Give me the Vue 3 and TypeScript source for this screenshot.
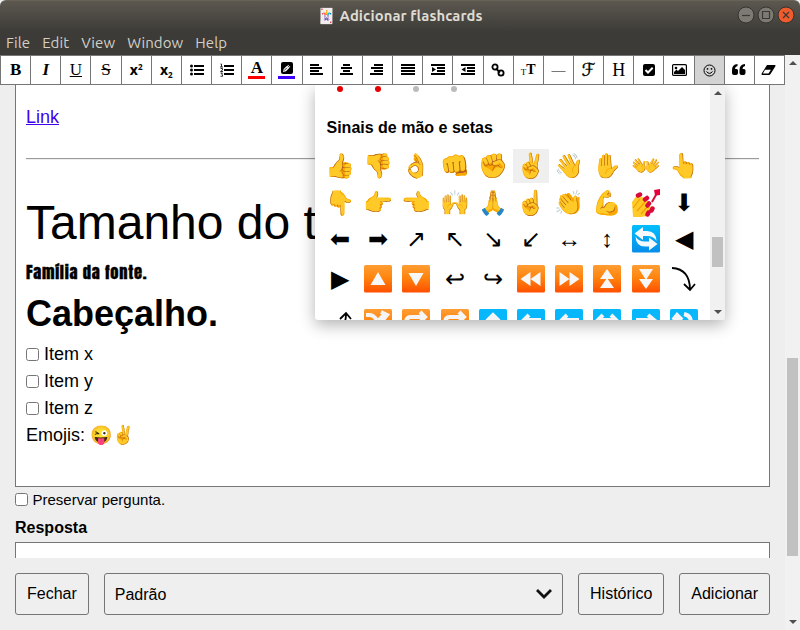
<script setup lang="ts">
interface Tool { id: string; text?: string; lines?: number[][] }
const tools: Tool[] = [
  { id: 'bold', text: 'B' }, { id: 'italic', text: 'I' }, { id: 'underline', text: 'U' }, { id: 'strike', text: 'S' },
  { id: 'sup' }, { id: 'sub' }, { id: 'ul' }, { id: 'ol' }, { id: 'color', text: 'A' }, { id: 'mark' },
  { id: 'left', lines: [[0, 9], [0, 12], [0, 9], [0, 13]] },
  { id: 'center', lines: [[3, 7], [1, 11], [3, 7], [0, 13]] },
  { id: 'right', lines: [[4, 9], [1, 12], [4, 9], [0, 13]] },
  { id: 'justify', lines: [[0, 14], [0, 14], [0, 14], [0, 14]] },
  { id: 'indent', lines: [[0, 14], [6, 8], [6, 8], [0, 14]] },
  { id: 'outdent', lines: [[0, 14], [6, 8], [6, 8], [0, 14]] },
  { id: 'link' }, { id: 'size' }, { id: 'hr', text: '—' }, { id: 'font', text: 'ℱ' }, { id: 'head', text: 'H' },
  { id: 'check' }, { id: 'image' }, { id: 'emoji' }, { id: 'quote' }, { id: 'clear' },
]
const menus = ['File', 'Edit', 'View', 'Window', 'Help']
const rows: string[][] = [
  ['👍', '👎', '👌', '👊', '✊', '✌️', '👋', '✋', '👐', '👆'],
  ['👇', '👉', '👈', '🙌', '🙏', '☝️', '👏', '💪', 'nails', '⬇'],
  ['⬅', '➡', '↗', '↖', '↘', '↙', '↔', '↕', 'cycle', '◀'],
  ['▶', 'oup', 'odown', '↩', '↪', 'orew', 'offw', 'odup', 'oddown', 'curve'],
  ['curveup', 'oshuffle', 'orepeat', 'orepeat', 'bup', 'bleft', 'bleft', 'bboth', 'bright', 'bturn'],
]
const orangeSolid: Record<string, string> = {
  oup: 'M14 7l7.500 13h-15z',
  odown: 'M14 21L6.500 8h15z',
  orew: 'M13.500 7v14L3.500 14zM23.500 7v14L13.500 14z',
  offw: 'M4.500 7v14l10-7zM14.500 7v14l10-7z',
  odup: 'M14 4l7 10H7zM14 13l7 10H7z',
  oddown: 'M14 24L7 14h14zM14 15L7 4h14z',
}
const orangeLine: Record<string, string> = {
  oshuffle: 'M2 6h4q4 0 8 7t8 7M2 20h4q4 0 8-7t8-7M17 3l6 3-5 6',
  orepeat: 'M4 18v-4q0-6 5-6h13M18 3l5 5-5 5',
}
const blueArrow: Record<string, string> = {
  bup: 'M14 23V7M8 12l6-6 6 6',
  bleft: 'M24 11H6M12 6l-5 5 5 5',
  bright: 'M4 11h18M16 6l6 5-6 5',
  bboth: 'M5 11h18M10 6l-5 5 5 5M18 6l5 5-5 5',
  bturn: 'M7 17V7M3 11l4-5 5 5M14 5q9 2 6 12',
}
const drawn = new Set(['nails', 'cycle', 'curve', 'curveup', ...Object.keys(orangeSolid), ...Object.keys(orangeLine), ...Object.keys(blueArrow)])
const items = ['Item x', 'Item y', 'Item z']
</script>

<template>
  <div class="window">
    <header class="chrome">
      <div class="title">
        <span class="joker">🃏</span><span>Adicionar flashcards</span>
        <div class="controls">
          <svg v-for="c in ['min', 'max', 'close']" :key="c" width="18" height="18" viewBox="0 0 18 18" :class="['ctl', c]">
            <circle cx="9" cy="9" r="8" />
            <path v-if="c === 'min'" d="M5 9.500h8" />
            <path v-else-if="c === 'max'" d="M5.500 5.500h7v7h-7z" />
            <path v-else d="M6 6l6 6M12 6l-6 6" />
          </svg>
        </div>
      </div>
      <nav class="menu"><span v-for="m in menus" :key="m">{{ m }}</span></nav>
    </header>

    <div class="page">
      <div class="left">
        <div class="toolbar">
          <button v-for="t in tools" :key="t.id" :class="['tool', t.id]">
            <svg v-if="t.lines" width="14" height="14" viewBox="0 0 14 14">
              <rect v-for="(l, i) in t.lines" :key="i" :x="l[0]" :y="1 + i * 3" :width="l[1]" height="2" />
              <path v-if="t.id === 'indent'" d="M1 4l4 2.500L1 9z" />
              <path v-if="t.id === 'outdent'" d="M4.500 4l-4 2.500 4 2.500z" />
            </svg>
            <template v-else-if="t.id === 'sup'">x<sup>2</sup></template>
            <template v-else-if="t.id === 'sub'">x<sub>2</sub></template>
            <svg v-else-if="t.id === 'ul'" width="14" height="14" viewBox="0 0 14 14">
              <path d="M4 2h10v2H4zM4 6h10v2H4zM4 10h10v2H4z" />
              <circle cx="1.500" cy="3" r="1.500" /><circle cx="1.500" cy="7" r="1.500" /><circle cx="1.500" cy="11" r="1.500" />
            </svg>
            <svg v-else-if="t.id === 'ol'" width="14" height="14" viewBox="0 0 14 14">
              <path d="M4 2h10v2H4zM4 6h10v2H4zM4 10h10v2H4z" />
              <path class="thin" d="M.5 1h1v3M0 4h3M.5 5.500h2V7l-2 1.500H3M.5 10h2l-1 1.200 1 .5v1.600h-2" />
            </svg>
            <template v-else-if="t.id === 'color'"><span class="glyph">A</span><i class="bar red" /></template>
            <template v-else-if="t.id === 'mark'">
              <svg width="12" height="12" viewBox="0 0 12 12"><rect width="12" height="12" rx="2" /><path fill="#fff" d="M2 10l.7-3L7 2.700l2.300 2.300L5 9.300z" /><path d="M6.200 3.300l2.400 2.400M3 8.700l3-3" stroke="#000" stroke-width=".8" /></svg>
              <i class="bar blue" />
            </template>
            <svg v-else-if="t.id === 'link'" width="14" height="14" viewBox="0 0 14 14" class="stroke">
              <circle cx="4" cy="4" r="2.600" /><circle cx="10" cy="10" r="2.600" /><path d="M5 5.500l4 4" />
            </svg>
            <template v-else-if="t.id === 'size'"><span class="t1">T</span><span class="t2">T</span></template>
            <svg v-else-if="t.id === 'check'" width="12" height="12" viewBox="0 0 12 12"><rect width="12" height="12" rx="2" /><path d="M2.500 6l2.500 2.500L9.700 3.700" fill="none" stroke="#fff" stroke-width="2" /></svg>
            <svg v-else-if="t.id === 'image'" width="15" height="12" viewBox="0 0 15 12"><rect x=".6" y=".6" width="13.800" height="10.800" rx="1" fill="none" stroke="#000" stroke-width="1.200" /><circle cx="4" cy="4" r="1.300" /><path d="M2 10V8l2.500-2.500L6 7l4-4 3 3v4z" /></svg>
            <svg v-else-if="t.id === 'emoji'" width="13" height="13" viewBox="0 0 13 13"><circle cx="6.500" cy="6.500" r="5.500" fill="none" stroke="#000" /><circle cx="4.500" cy="4.800" r=".9" /><circle cx="8.500" cy="4.800" r=".9" /><path d="M3.500 7.500q3 3.800 6 0" fill="none" stroke="#000" /></svg>
            <svg v-else-if="t.id === 'quote'" width="14" height="12" viewBox="0 0 14 12"><path d="M5.500 0v2Q3 2.500 3 5h1.500q1.500 0 1.500 1.500V9q0 2-2 2H2q-2 0-2-2V6q0-5.500 5.500-6zM13 0v2q-2.500.5-2.500 3H12q1.500 0 1.500 1.500V9q0 2-2 2h-2q-2 0-2-2V6q0-5.500 5.500-6z" /></svg>
            <svg v-else-if="t.id === 'clear'" width="16" height="12" viewBox="0 0 16 12"><path d="M6 1h7.500q1.500 0 .9 1.200L9.500 10q-.5 1-1.600 1H1.500Q0 11 .7 9.600zM4 5.800L1.900 9.500h5.600l2.400-3.700z" fill-rule="evenodd" /></svg>
            <span v-else class="glyph">{{ t.text }}</span>
          </button>
        </div>

        <div class="scroll">
          <main class="editor">
            <div class="linkrow"><a href="#">Link</a></div>
            <hr>
            <div class="big">Tamanho do t</div>
            <div class="impact">Família da fonte.</div>
            <h1>Cabeçalho.</h1>
            <label v-for="i in items" :key="i" class="item"><input type="checkbox">{{ i }}</label>
            <div class="emojis">Emojis: <span>😜✌️</span></div>
          </main>
          <label class="keep"><input type="checkbox">Preservar pergunta.</label>
          <div class="answer">Resposta</div>
          <div class="answerbox" />
        </div>

        <footer>
          <button>Fechar</button>
          <button class="deck">Padrão
            <svg width="18" height="12" viewBox="0 0 18 12"><path d="M2 2l7 7 7-7" /></svg>
          </button>
          <button>Histórico</button>
          <button>Adicionar</button>
        </footer>
      </div>
      <div class="vbar"><i class="up" /><i class="thumb" /><i class="down" /></div>
    </div>

    <section class="picker">
      <div class="pickbody">
        <div class="dots"><i /><i /><i class="gray" /><i class="gray" /></div>
        <h2>Sinais de mão e setas</h2>
        <div class="rows">
          <div v-for="(r, ri) in rows" :key="ri" :class="['row', 'r' + ri]">
            <span v-for="(e, ei) in r" :key="ei" :class="['cell', { sel: ri === 0 && ei === 5 }]">
              <svg v-if="drawn.has(e)" width="28" height="28" viewBox="0 0 28 28">
                <template v-if="e === 'nails'">
                  <path fill="#ffca28" d="M0 13L5 6l5 2 4 1 3 5 2 5-4 8-6 1H1z" />
                  <path d="M1 19l7-9M5 22l8-9M9 25l7-8" stroke="#f2a000" stroke-width="1.200" />
                  <g stroke="#d90b3e" stroke-width="4.500" stroke-linecap="round"><path d="M6 6.500l2-1M13 10.500l2-1.500M15.500 16.500l1.500-2M19.500 21.500l1-2M15.500 25.500l1-2" /></g>
                  <path d="M20 13l5-9" stroke="#d90b3e" stroke-width="2" /><path fill="#e8003c" d="M22 1l6-1v6l-5 .5z" />
                </template>
                <template v-else-if="e === 'cycle'">
                  <defs><linearGradient id="cyc" x2="0" y2="1"><stop stop-color="#00bfff" /><stop offset="1" stop-color="#078de8" /></linearGradient></defs>
                  <rect width="28" height="27.500" rx="1.500" fill="url(#cyc)" />
                  <path fill="#f5f9fc" d="M2.500 8.500L11 2v4h4q9 0 9.500 10-3-5-9.500-5H11v4zM25.500 19L17 25.500v-4h-4Q4 21.500 3.500 11.500q3 5 9.500 5h4v-4z" />
                </template>
                <path v-else-if="e === 'curve'" d="M2 3Q20 4 20 25M14 19l6 6 5-6" class="curve" />
                <path v-else-if="e === 'curveup'" d="M2 27Q20 25 20 4M14 10l6-6 5 6" class="curve" />
                <template v-else-if="e in blueArrow">
                  <rect width="28" height="28" rx="1.500" fill="#06b8fb" />
                  <path :d="blueArrow[e]" class="white" />
                </template>
                <template v-else>
                  <defs><linearGradient :id="'g' + e" x2="0" y2="1"><stop stop-color="#ff9d33" /><stop offset=".45" stop-color="#ff850f" /><stop offset="1" stop-color="#ff4f00" /></linearGradient></defs>
                  <rect width="28" height="27.500" rx="1.500" :fill="'url(#g' + e + ')'" />
                  <path v-if="orangeSolid[e]" :d="orangeSolid[e]" class="solid" />
                  <path v-else :d="orangeLine[e]" class="white" />
                </template>
              </svg>
              <template v-else>{{ e }}</template>
            </span>
          </div>
        </div>
      </div>
      <div class="pbar"><i class="up" /><i class="thumb" /><i class="down" /></div>
    </section>
  </div>
</template>

<style>
body { background: #fff; overflow: hidden; }
</style>
<style scoped>
* { box-sizing: border-box; }
.window { position: relative; display: flex; flex-direction: column; width: 800px; height: 630px; overflow: hidden; background: #eee; color: #000; font: 18px/27px "Liberation Sans", Arial, sans-serif; }
button { font: inherit; color: #000; }
.chrome { height: 55px; flex: none; background: linear-gradient(#5c5850, #3c3b37 31px); border-top: 1px solid #676359; border-radius: 6px 6px 0 0; font-family: Ubuntu, "Noto Sans", sans-serif; color: #dfdbd2; }
.title { position: relative; height: 29px; display: flex; align-items: center; justify-content: center; gap: 3px; font-weight: 700; font-size: 14.800px; letter-spacing: .1px; }
.joker { font-size: 15px; font-weight: 400; }
.controls { position: absolute; right: 5px; top: 5px; display: flex; gap: 2px; }
.ctl circle { fill: #7c7a72; stroke: #33322e; }
.ctl path { fill: none; stroke: #3a3935; stroke-width: 1.2; }
.ctl.close circle { fill: #ee5b2c; }
.menu { display: flex; padding-left: 6px; gap: 12px; font-size: 15px; letter-spacing: .1px; line-height: 26px; color: #d4d0c7; }
.page { display: flex; flex: 1; min-height: 0; }
.left { width: 785px; display: flex; flex-direction: column; }
.toolbar { display: flex; height: 30px; flex: none; width: 785px; border: 1px solid #767676; border-right: 0; background: #fff; }
.tool { position: relative; flex: 1 1 0; min-width: 0; padding: 0; border: 0; border-right: 1px solid #767676; background: #fff; display: flex; align-items: center; justify-content: center; font: 17px/28px "Liberation Serif", serif; }
.tool.bold, .tool.italic, .tool.sup, .tool.sub { font-weight: 700; }
.tool.italic { font-style: italic; }
.tool.underline { text-decoration: underline; }
.tool.strike { text-decoration: line-through; }
.tool.sup, .tool.sub { font: 700 14px/20px "Open Sans", sans-serif; }
.tool sup, .tool sub { font-size: 8px; line-height: 8px; }
.tool sup { margin-top: -7px; }
.tool sub { margin-top: 9px; }
.tool.color, .tool.mark { flex-direction: column; justify-content: flex-start; font-weight: 700; }
.tool.color .glyph { line-height: 18px; height: 20px; padding-top: 3px; font-size: 17px; }
.tool.mark svg { margin: 6px 0 2px; flex: none; }
.bar { width: 17px; height: 3px; flex: none; }
.red { background: #f00; }
.blue { background: #4000ff; }
.tool.emoji { background: #d3d3d3; }
.tool.font { font: 18px/28px "DejaVu Sans", serif; }
.tool.font .glyph { -webkit-text-stroke: .3px #000; }
.tool.hr .glyph { font-size: 14px; padding-top: 2px; }
.tool.head { font-size: 18px; }
.t1 { font-size: 9px; padding-top: 3px; }
.t2 { font-weight: 700; font-size: 14px; }
.thin { fill: none; stroke: #000; stroke-width: .8; }
.stroke { fill: none; stroke: #000; stroke-width: 1.800; }
.scroll { height: 473px; flex: none; overflow: hidden; padding: 0 15px; }
.editor { height: 402px; background: #fff; border: 1px solid #767676; border-top: 0; padding: 19px 10px 0; overflow: hidden; }
.linkrow a { color: #4000ee; text-decoration: underline; }
hr { margin: 27px 0 27px; height: 2px; border: solid #9a9a9a; border-width: 1px 0 0; border-bottom: 1px solid #eee; }
.big { height: 72px; font-size: 48px; line-height: 72px; white-space: nowrap; }
.impact { font-family: Impact, Anton, sans-serif; height: 28px; font-size: 16.500px; letter-spacing: .73px; line-height: 26px; -webkit-text-stroke: .35px #000; }
h1 { margin: 0; font-size: 36px; line-height: 54px; height: 54px; }
.item { display: flex; align-items: center; height: 27px; }
input { width: 13px; height: 13px; margin: 0 5px 0 0; }
.keep { display: flex; align-items: center; height: 26px; padding-bottom: 1px; font-size: 15px; }
.keep input { margin-right: 4.500px; }
.answer { font-size: 16px; font-weight: 700; line-height: 29px; height: 29px; }
.answerbox { height: 30px; background: #fff; border: 1px solid #767676; }
footer { display: flex; gap: 15px; padding: 15px 15px; }
footer button { height: 42px; padding: 0 11px 2px; background: #efefef; border: 1px solid #767676; border-radius: 3px; font-size: 16px; white-space: nowrap; }
footer .deck { flex: 1; display: flex; align-items: center; justify-content: space-between; padding: 0 9px 0 10px; }
.deck path { fill: none; stroke: #111; stroke-width: 2.800; }
.vbar, .pbar { display: flex; flex-direction: column; align-items: center; width: 15px; background: #f1f1f1; }
.thumb { width: 11px; background: #c1c1c1; }
.up, .down { border: 4px solid transparent; width: 0; height: 0; }
.up { border-bottom-color: #505050; border-top: 0; }
.down { border-top-color: #505050; border-bottom: 0; }
.vbar .up { margin-top: 6px; }
.vbar .thumb { height: 198px; margin-top: 293px; }
.vbar .down { margin-top: auto; margin-bottom: 6px; }
.picker { position: absolute; left: 315px; top: 85px; width: 410px; height: 235px; display: flex; overflow: hidden; background: #fff; border-radius: 0 0 3px 3px; box-shadow: 0 5px 16px rgba(0, 0, 0, .3); clip-path: inset(0 -30px -30px -30px); }
.pickbody { width: 395px; padding-left: 7px; overflow: hidden; }
.dots { display: flex; gap: 32px; padding: 1px 0 0 15px; height: 29px; }
.dots i { width: 6px; height: 6px; border-radius: 3px; background: #e60000; }
.dots .gray { background: #bbb; }
h2 { margin: 0 0 0 4.500px; font-size: 16px; line-height: 27px; }
.rows { padding-top: 8px; }
.row { display: flex; gap: 2.200px; height: 37px; }
.row.r2 { height: 38px; }
.row.r3 { height: 45px; }
.cell { width: 36px; height: 34px; display: flex; flex: none; align-items: center; justify-content: center; font-size: 24px; line-height: 24px; }
.cell.sel { background: #efefef; }
.r2 .cell { height: 32px; }
.r3 .cell { height: 36px; }
.curve { fill: none; stroke: #000; stroke-width: 1.800; }
.white { fill: none; stroke: #f5f5f5; stroke-width: 4; }
.solid { fill: #f7f7f7; }
.pbar .up { margin-top: 6px; }
.pbar .thumb { height: 30px; margin-top: 142px; }
.pbar .down { margin-top: auto; margin-bottom: 6px; }
</style>
